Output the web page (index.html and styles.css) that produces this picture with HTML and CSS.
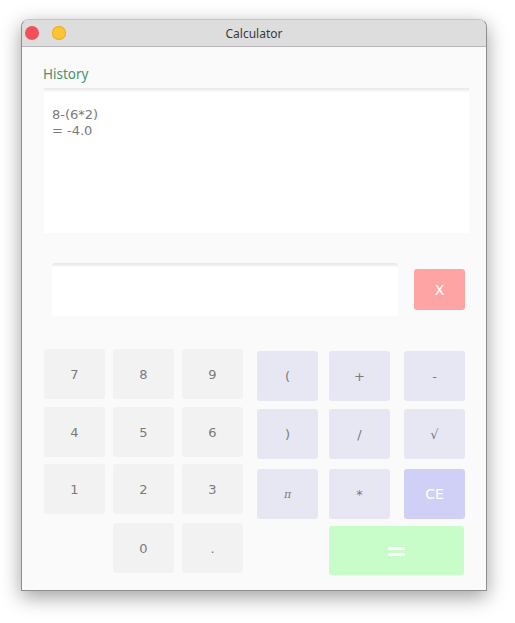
FILE: index.html
```html
<!DOCTYPE html>
<html>
<head>
<meta charset="utf-8">
<link rel="stylesheet" href="styles.css">
</head>
<body>
<div class="window">
  <div class="titlebar">
    <span class="dot red"></span>
    <span class="dot yellow"></span>
    <span class="title">Calculator</span>
  </div>
  <div class="content">
    <div class="history-label">History</div>
    <div class="history">
      <div>8-(6*2)</div>
      <div>= -4.0</div>
    </div>
    <div class="input-row">
      <div class="input"></div>
      <div class="btn clear">X</div>
    </div>
    <div class="keypad">
      <div class="digits">
        <div class="btn d">7</div><div class="btn d">8</div><div class="btn d">9</div>
        <div class="btn d">4</div><div class="btn d">5</div><div class="btn d">6</div>
        <div class="btn d">1</div><div class="btn d">2</div><div class="btn d">3</div>
        <div class="btn d c2">0</div><div class="btn d">.</div>
      </div>
      <div class="ops">
        <div class="btn o">(</div><div class="btn o">+</div><div class="btn o">-</div>
        <div class="btn o">)</div><div class="btn o">/</div><div class="btn o">√</div>
        <div class="btn o pi">π</div><div class="btn o">*</div><div class="btn ce">CE</div>
        <div class="btn eq">=</div>
      </div>
    </div>
  </div>
</div>
</body>
</html>
```

FILE: styles.css
```css
html, body {
  margin: 0;
  padding: 0;
  background: #ffffff;
}
body {
  font-family: "DejaVu Sans", sans-serif;
  min-height: 623px;
  padding-top: 19px;
  box-sizing: border-box;
}
.window {
  margin: 0 0 0 21px;
  width: 464px;
  height: 570px;
  border: 1px solid #8e8e8e;
  border-top-color: #c4c4c4;
  border-radius: 8px 8px 0 0;
  background: #fafafa;
  box-shadow: 0 6px 20px rgba(0, 0, 0, 0.38);
  overflow: hidden;
  display: flex;
  flex-direction: column;
}
.titlebar {
  height: 26px;
  background: #dddddd;
  border-bottom: 1px solid #b8b8b8;
  position: relative;
  display: flex;
  align-items: center;
  padding-left: 3px;
  gap: 13px;
}
.dot {
  width: 14px;
  height: 14px;
  border-radius: 50%;
  display: block;
}
.red {
  background: #f24f5a;
}
.yellow {
  background: #fbc435;
  box-shadow: inset 0 0 0 1px #eaaf1e;
}
.title {
  position: absolute;
  left: 0;
  right: 0;
  text-align: center;
  font-family: "Noto Sans", sans-serif;
  font-size: 12px;
  color: #3a3a3a;
}
.content {
  flex: 1;
  padding: 18px 17px 0 21px;
}
.history-label {
  font-family: "Noto Sans", sans-serif;
  font-size: 13.5px;
  color: #46956f;
  height: 23px;
  line-height: 18px;
}
.history {
  height: 126px;
  margin-left: 1px;
  background: linear-gradient(#e9e9e9, #f4f4f4 3px, #ffffff 4px);
  padding: 19px 8px 0 8px;
  font-size: 13px;
  line-height: 16px;
  color: #7a7a7a;
}
.input-row {
  display: flex;
  align-items: center;
  margin-top: 30px;
  padding-left: 9px;
  padding-right: 4px;
  gap: 16px;
}
.input {
  width: 346px;
  height: 53px;
  border-radius: 3px;
  background: linear-gradient(#e7e7e7, #f3f3f3 3px, #ffffff 4px);
}
.btn {
  display: flex;
  align-items: center;
  justify-content: center;
  border-radius: 3px;
  width: 61px;
  height: 50px;
  font-size: 13px;
  color: #7a7a7a;
}
.clear {
  width: 51px;
  height: 41px;
  background: #ffa4a4;
  color: #ffffff;
  font-size: 14px;
}
.keypad {
  display: flex;
  margin-top: 33px;
  margin-left: 1px;
  gap: 14px;
}
.digits {
  display: grid;
  grid-template-columns: 61px 61px 61px;
  grid-template-rows: 58px 57px 59px 50px;
  column-gap: 8px;
}
.d {
  background: #f2f2f2;
}
.c2 {
  grid-column: 2;
}
.ops {
  display: grid;
  grid-template-columns: 72px 75px 61px;
  grid-template-rows: 58px 60px 57px 49px;
  margin-top: 2px;
}
.o {
  background: #e7e7f4;
}
.pi {
  font-family: "DejaVu Serif", serif;
  font-style: italic;
  font-size: 11px;
}
.ce {
  background: #d0d0f6;
  color: #ffffff;
  font-size: 14px;
}
.eq {
  grid-column: 2 / 4;
  width: 135px;
  height: 49px;
  background: #c8fcc8;
  color: #ffffff;
  font-size: 26px;
  font-weight: bold;
}
```
